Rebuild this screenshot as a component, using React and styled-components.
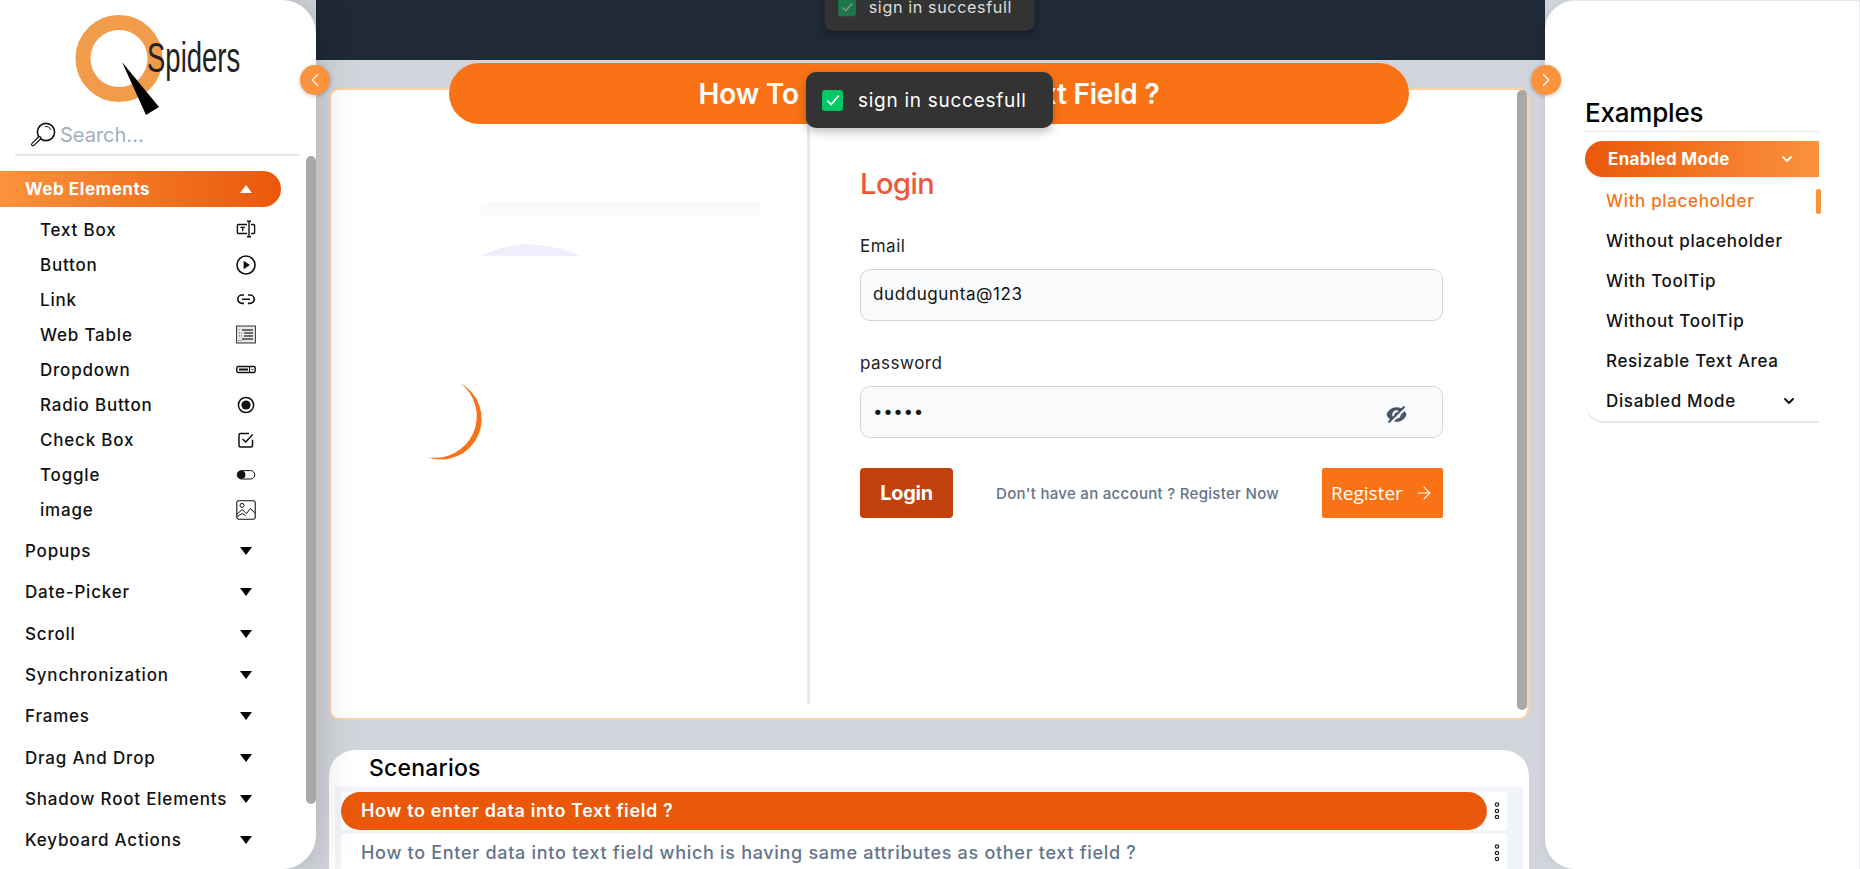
import React from "react";
import styled, { createGlobalStyle } from "styled-components";
import { ChevronDown, ChevronLeft, ChevronRight, ArrowRight } from "lucide-react";
import { HiEyeOff } from "react-icons/hi";

const Global = createGlobalStyle`
  html, body { margin: 0; padding: 0; height: 100%; overflow: hidden; }
  body { font-family: Inter, "Liberation Sans", sans-serif; background: #d1d5db; }
  * { box-sizing: border-box; }
`;

const Page = styled.div`
  display: grid;
  grid-template-columns: 316px 1fr 315px;
  height: 869px;
  overflow: hidden;
  position: relative;
  background: #d1d5db;
`;

const Sidebar = styled.aside`
  position: relative;
  z-index: 3;
  background: #fff;
  border-radius: 0 34px 34px 0;
  box-shadow: 0 0 42px rgba(0, 0, 0, 0.18);
  height: 869px;
  overflow: hidden;
`;

const LogoWrap = styled.div`
  height: 116px;
  padding-left: 70px;
  svg { display: block; }
`;

const SearchRow = styled.div`
  display: flex;
  align-items: center;
  gap: 4px;
  height: 40px;
  margin: 0 16px 0 15px;
  padding: 0 0 0 15px;
  border-bottom: 2px solid #e5e7eb;
`;

const SearchText = styled.span`
  font-size: 20px;
  letter-spacing: 0;
  color: #a0aec0;
`;

const Thumb = styled.div`
  position: absolute;
  right: 0;
  top: 156px;
  width: 10px;
  height: 648px;
  background: #a8a8a8;
  border-radius: 6px;
`;

const Nav = styled.nav`
  padding-top: 15px;
  width: 281px;
`;

const ActiveHead = styled.div`
  display: flex;
  align-items: center;
  justify-content: space-between;
  height: 36px;
  padding: 0 29px 0 25px;
  border-radius: 0 18px 18px 0;
  background: linear-gradient(90deg, #fb923c, #ea580c);
  color: #fff;
  font-size: 17px;
  font-weight: 700;
  letter-spacing: 0.55px;
`;

const SubList = styled.ul`
  list-style: none;
  margin: 5px 0 3.5px;
  padding: 0;
`;

const SubRow = styled.li`
  display: flex;
  align-items: center;
  justify-content: space-between;
  height: 35px;
  padding: 0 25px 0 40px;
  font-size: 17px;
  font-weight: 500;
  letter-spacing: 0.8px;
  color: #111;
  svg { display: block; }
`;

const SectionRow = styled.div`
  display: flex;
  align-items: center;
  justify-content: space-between;
  height: 41.3px;
  padding: 0 29px 0 25px;
  font-size: 17px;
  font-weight: 500;
  letter-spacing: 0.8px;
  color: #111;
  white-space: nowrap;
`;

const Caret = styled.span`
  flex: none;
  width: 0;
  height: 0;
  border-left: 6.5px solid transparent;
  border-right: 6.5px solid transparent;
  border-top: ${(p) => (p.$up ? "0" : "8px solid #000")};
  border-bottom: ${(p) => (p.$up ? "8px solid #fff" : "0")};
`;

const Main = styled.main`
  position: relative;
  display: flex;
  flex-direction: column;
  height: 869px;
  overflow: hidden;
  z-index: 1;
`;

const Header = styled.header`
  flex: none;
  height: 60px;
  background: #1f2937;
`;

const Content = styled.div`
  flex: 1;
  min-height: 0;
  padding: 28px 16px 0 13px;
  display: flex;
  flex-direction: column;
  gap: 30px;
`;

const Card = styled.section`
  position: relative;
  flex: none;
  height: 632px;
  display: grid;
  grid-template-columns: 476px 3px 1fr;
  background: #fff;
  border: 2px solid #fbd3a6;
  border-radius: 10px;
`;

const TitlePill = styled.h1`
  position: absolute;
  left: 118px;
  top: -27px;
  width: 960px;
  height: 61px;
  margin: 0;
  display: flex;
  align-items: center;
  justify-content: center;
  background: #f97316;
  border-radius: 31px;
  color: #fff;
  font-size: 28px;
  font-weight: 600;
  letter-spacing: -0.2px;
  z-index: 2;
`;

const CardThumb = styled.div`
  position: absolute;
  right: 0;
  top: 0;
  width: 10px;
  height: 620px;
  background: #a8a8a8;
  border-radius: 6px;
`;

const Illustration = styled.div`
  svg { display: block; }
`;

const Divider = styled.div`
  background: #e5e7eb;
  margin: 34px 0 14px;
`;

const FormPane = styled.div`
  padding: 72px 84px 0 50px;
`;

const FormTitle = styled.h2`
  margin: 0 0 28px;
  font-size: 29px;
  line-height: 44px;
  font-weight: 500;
  letter-spacing: -0.5px;
  color: #f0563a;
`;

const Label = styled.label`
  display: block;
  font-size: 17px;
  line-height: 24px;
  margin-bottom: 11px;
  color: #222;
  letter-spacing: 0.5px;
`;

const FieldBox = styled.div`
  position: relative;
  height: 52px;
  margin-bottom: 30px;
`;

const Input = styled.input`
  display: block;
  width: 100%;
  height: 100%;
  padding: 0 12px 3px;
  background: #f9fafb;
  border: 1px solid #d1d5db;
  border-radius: 10px;
  font-family: inherit;
  font-size: 17px;
  letter-spacing: 0.6px;
  color: #111;
  outline: none;
`;

const EyeBox = styled.span`
  position: absolute;
  right: 36px;
  top: 18px;
  color: #475569;
  display: flex;
  transform: scaleX(-1);
`;

const ActionRow = styled.div`
  display: flex;
  align-items: center;
  justify-content: space-between;
  height: 50px;
`;

const LoginButton = styled.button`
  width: 93px;
  height: 50px;
  border: 0;
  border-radius: 4px;
  background: #c2410c;
  color: #fff;
  font-family: inherit;
  font-size: 20px;
  font-weight: 700;
  letter-spacing: -0.3px;
`;

const RegisterHint = styled.span`
  font-size: 15px;
  font-weight: 500;
  color: #64748b;
  letter-spacing: 0.3px;
`;

const RegisterButton = styled.button`
  display: flex;
  align-items: center;
  justify-content: center;
  gap: 11px;
  width: 121px;
  height: 50px;
  padding: 0;
  border: 0;
  border-radius: 2px;
  background: #f97316;
  color: #fff;
  font-family: "Open Sans", sans-serif;
  font-size: 19px;
`;

const Scenarios = styled.section`
  flex: none;
  height: 200px;
  background: #fff;
  border-radius: 26px 26px 0 0;
  padding: 0 6px;
`;

const ScenariosTitle = styled.h3`
  margin: 0;
  height: 37px;
  padding-left: 34px;
  font-size: 23px;
  line-height: 37px;
  font-weight: 500;
  letter-spacing: 0.2px;
  color: #000;
`;

const ScenarioList = styled.div`
  display: flex;
  flex-direction: column;
  gap: 4px;
  background: #f1f5f9;
  padding: 5px 16px 0 6px;
  height: 200px;
`;

const ScenarioRow = styled.div`
  display: flex;
  align-items: center;
  justify-content: space-between;
  flex: none;
  height: 38px;
  background: #fff;
  color: #64748b;
  font-size: 18px;
  font-weight: 500;
`;

const ScenarioLabel = styled.span`
  flex: 1;
  height: 100%;
  display: flex;
  align-items: center;
  padding: 0 0 2px 20px;
  border-radius: ${(p) => (p.$active ? "19px" : "0")};
  background: ${(p) => (p.$active ? "#ea580c" : "transparent")};
  color: ${(p) => (p.$active ? "#fff" : "#64748b")};
  font-weight: ${(p) => (p.$active ? 600 : 500)};
  letter-spacing: ${(p) => (p.$active ? "0.62px" : "0.7px")};
`;

const DotsBox = styled.span`
  flex: none;
  width: 20px;
  display: flex;
  justify-content: center;
`;

const RightPanel = styled.aside`
  position: relative;
  z-index: 2;
  background: #fff;
  height: 869px;
  border: 1px solid #e5e7eb;
  border-width: 1px 1px 0 0;
  border-radius: 30px 0 0 30px;
  padding: 94px 40px 0 40px;
  box-shadow: 0 0 8px rgba(0, 0, 0, 0.06);
`;

const RightTitle = styled.h3`
  margin: 0 0 9px;
  height: 37px;
  font-size: 26px;
  line-height: 36px;
  font-weight: 500;
  letter-spacing: -0.2px;
  color: #000;
  border-bottom: 1px solid #e5e7eb;
`;

const ModeHead = styled.div`
  display: flex;
  align-items: center;
  justify-content: space-between;
  height: 36px;
  padding: 0 24px 1px 23px;
  border-radius: 18px 0 0 18px;
  background: linear-gradient(90deg, #ea580c, #fb923c);
  color: #fff;
  font-size: 17px;
  font-weight: 700;
  letter-spacing: 0.3px;
  box-shadow: 0 2px 3px rgba(0, 0, 0, 0.07);
`;

const ExampleList = styled.ul`
  list-style: none;
  margin: 4px 0 0;
  padding: 0;
  border-bottom: 2px solid #e5e7eb;
  border-radius: 0 0 0 20px;
`;

const ExampleItem = styled.li`
  position: relative;
  display: flex;
  align-items: center;
  justify-content: space-between;
  height: 40px;
  padding: 0 22px 0 21px;
  font-size: 17px;
  font-weight: 500;
  letter-spacing: 0.65px;
  color: ${(p) => (p.$active ? "#f97316" : "#111")};
  ${(p) =>
    p.$active
      ? `&::after { content: ""; position: absolute; right: -2px; top: 8px; width: 5px; height: 25px; border-radius: 2px; background: #fb923c; }`
      : ""}
`;

const RoundToggle = styled.button`
  position: absolute;
  top: 65px;
  left: ${(p) => p.$left}px;
  z-index: 5;
  width: 30px;
  height: 30px;
  padding: 0;
  border: 0;
  border-radius: 50%;
  background: #fb923c;
  color: #fff;
  display: flex;
  align-items: center;
  justify-content: center;
  box-shadow: 0 1px 4px rgba(0, 0, 0, 0.25);
`;

const ToastLayer = styled.div`
  position: absolute;
  left: 806px;
  top: ${(p) => p.$top}px;
  z-index: 6;
  transform: scale(${(p) => p.$scale});
  width: 247px;
  height: 56px;
  display: flex;
  align-items: center;
  gap: 15px;
  padding-left: 16px;
  background: #333;
  border-radius: 10px;
  box-shadow: 0 4px 10px rgba(0, 0, 0, 0.25);
  color: ${(p) => (p.$dim ? "#ddd" : "#fff")};
  font-size: 19px;
  letter-spacing: 0.72px;
  white-space: nowrap;
`;

const ToastCheck = styled.span`
  flex: none;
  width: 21px;
  height: 21px;
  display: flex;
  align-items: center;
  justify-content: center;
  border-radius: 3px;
  background: #00c864;
  opacity: ${(p) => (p.$dim ? 0.45 : 1)};
`;

const Icon = ({ children, fill = "none" }) => (
  <svg width="20" height="20" viewBox="0 0 20 20" fill={fill} stroke="#111" strokeWidth="1.4">
    {children}
  </svg>
);

const icons = {
  text: (
    <Icon>
      <path d="M11 4.5H2.4a1 1 0 0 0-1 1v7a1 1 0 0 0 1 1H11M15 4.5h2.6a1 1 0 0 1 1 1v7a1 1 0 0 1-1 1H15" />
      <path d="M13 1.5v15M11 1.3h4M11 16.7h4" />
      <path d="M4.5 7.3h4.4M6.7 7.3v4" strokeWidth="1.3" />
    </Icon>
  ),
  play: (
    <Icon>
      <circle cx="10" cy="10" r="9" strokeWidth="1.6" />
      <path d="M7.6 5.8 14 10l-6.4 4.2z" fill="#111" stroke="none" />
    </Icon>
  ),
  link: (
    <Icon>
      <path d="M8 5H6a4.2 4.2 0 0 0 0 8.4h2M12 5h2a4.2 4.2 0 0 1 0 8.4h-2M6 9.2h8" strokeWidth="1.6" />
    </Icon>
  ),
  table: (
    <Icon>
      <rect x="0.6" y="1" width="18.8" height="17" stroke="#333" strokeWidth="1" fill="#e8e8e8" />
      <path d="M6 5h11M8 8h9M8 11h9M6 14h11" stroke="#444" strokeWidth="1.5" />
      <path d="M2.5 5h2M3 8h3M3 11h3M2.5 15.5h3" stroke="#555" strokeWidth="1" strokeDasharray="1 1" />
    </Icon>
  ),
  dropdown: (
    <Icon>
      <rect x="0.8" y="6.5" width="18.4" height="6" rx="1.5" strokeWidth="1.4" />
      <path d="M3 9.5h9" strokeWidth="2" />
      <path d="M13.5 6.5v6" strokeWidth="1" />
      <path d="M15.3 8.7 16.4 10.2 17.5 8.7" strokeWidth="0.9" />
    </Icon>
  ),
  radio: (
    <Icon>
      <circle cx="10" cy="10" r="7.6" strokeWidth="1.5" />
      <circle cx="10" cy="10" r="4.6" fill="#111" stroke="none" />
    </Icon>
  ),
  check: (
    <Icon>
      <path d="M16.5 9.8v5.7a1.5 1.5 0 0 1-1.5 1.5H4.5A1.5 1.5 0 0 1 3 15.5V5a1.5 1.5 0 0 1 1.5-1.5H13" strokeWidth="1.5" />
      <path d="m6.5 9 3.2 3 7-7.5" strokeWidth="1.5" />
    </Icon>
  ),
  toggle: (
    <Icon>
      <rect x="1.2" y="5.6" width="17.6" height="8.4" rx="4.2" strokeWidth="1" />
      <circle cx="5.4" cy="9.8" r="4" fill="#111" stroke="none" />
    </Icon>
  ),
  image: (
    <Icon>
      <rect x="0.8" y="0.8" width="18.4" height="18.4" rx="1.6" strokeWidth="1.1" />
      <circle cx="6" cy="5.4" r="2" strokeWidth="1" />
      <path d="m1 14 5.2-4.4 4.3 4 4-5.2 4.6 5M1 16.5l5.2-3 3.2 2" strokeWidth="1" />
    </Icon>
  ),
};

const subItems = [
  ["Text Box", "text"],
  ["Button", "play"],
  ["Link", "link"],
  ["Web Table", "table"],
  ["Dropdown", "dropdown"],
  ["Radio Button", "radio"],
  ["Check Box", "check"],
  ["Toggle", "toggle"],
  ["image", "image"],
];

const sections = [
  "Popups",
  "Date-Picker",
  "Scroll",
  "Synchronization",
  "Frames",
  "Drag And Drop",
  "Shadow Root Elements",
  "Keyboard Actions",
];

const examples = ["Without placeholder", "With ToolTip", "Without ToolTip", "Resizable Text Area"];

const Dots = () => (
  <svg width="6" height="20" viewBox="0 0 6 20" fill="none" stroke="#222" strokeWidth="1.2">
    <circle cx="3" cy="3.5" r="1.7" />
    <circle cx="3" cy="10" r="1.7" />
    <circle cx="3" cy="16" r="1.7" />
  </svg>
);

const CheckMark = () => (
  <svg width="16" height="16" viewBox="0 0 14 14" fill="none" stroke="#fff" strokeWidth="1.5">
    <path d="m2 7.5 3.4 3.4L12 3.2" />
  </svg>
);

const Logo = () => (
  <svg width="180" height="116" viewBox="0 0 180 116">
    <circle cx="49" cy="58.5" r="36" fill="none" stroke="#f19c4a" strokeWidth="15" />
    <text transform="translate(77 72) scale(0.655 1)" fontFamily="'Liberation Sans', sans-serif" fontSize="42" fill="#222">
      Spiders
    </text>
    <polygon points="52,62 89,107 76,115" fill="#000" />
  </svg>
);

const Magnifier = () => (
  <svg width="26" height="26" viewBox="0 0 26 26" fill="none" stroke="#111">
    <circle cx="16" cy="10" r="8.6" strokeWidth="1.6" />
    <path d="M15 4.5a6 6 0 0 1 6 3.5" strokeWidth="1" />
    <path d="m9.5 16-6.5 6.4" strokeWidth="4" strokeLinecap="round" />
    <path d="m9.5 16-6.5 6.4" strokeWidth="1.6" stroke="#fff" strokeLinecap="round" />
  </svg>
);

const Placeholder = () => (
  <svg width="476" height="400" viewBox="0 0 476 400">
    <rect x="150" y="112" width="280" height="13" fill="#f9fafb" />
    <path d="M150 165.5 Q196 143 249 166 Z" fill="#f0edfc" />
    <path d="M129 293A40.6 40.6 0 0 1 96 367A41.5 41.5 0 0 0 129 293Z" fill="#f97316" />
  </svg>
);

export default function App() {
  return (
    <Page>
      <Global />
      <Sidebar>
        <LogoWrap>
          <Logo />
        </LogoWrap>
        <SearchRow>
          <Magnifier />
          <SearchText>Search...</SearchText>
        </SearchRow>
        <Thumb />
        <Nav>
          <ActiveHead>
            Web Elements
            <Caret $up />
          </ActiveHead>
          <SubList>
            {subItems.map(([name, icon]) => (
              <SubRow key={name}>
                {name}
                {icons[icon]}
              </SubRow>
            ))}
          </SubList>
          {sections.map((s) => (
            <SectionRow key={s}>
              {s}
              <Caret />
            </SectionRow>
          ))}
        </Nav>
      </Sidebar>

      <Main>
        <Header />
        <Content>
          <Card>
            <TitlePill>How To Enter Data Into Text Field ?</TitlePill>
            <Illustration>
              <Placeholder />
            </Illustration>
            <Divider />
            <FormPane>
              <FormTitle>Login</FormTitle>
              <Label>Email</Label>
              <FieldBox>
                <Input readOnly value="duddugunta@123" />
              </FieldBox>
              <Label>password</Label>
              <FieldBox>
                <Input readOnly type="password" value="12345" />
                <EyeBox>
                  <HiEyeOff size={21} />
                </EyeBox>
              </FieldBox>
              <ActionRow>
                <LoginButton>Login</LoginButton>
                <RegisterHint>Don't have an account ? Register Now</RegisterHint>
                <RegisterButton>
                  Register
                  <ArrowRight size={20} strokeWidth={1.3} />
                </RegisterButton>
              </ActionRow>
            </FormPane>
            <CardThumb />
          </Card>
          <Scenarios>
            <ScenariosTitle>Scenarios</ScenariosTitle>
            <ScenarioList>
              <ScenarioRow>
                <ScenarioLabel $active>How to enter data into Text field ?</ScenarioLabel>
                <DotsBox>
                  <Dots />
                </DotsBox>
              </ScenarioRow>
              <ScenarioRow>
                <ScenarioLabel>How to Enter data into text field which is having same attributes as other text field ?</ScenarioLabel>
                <DotsBox>
                  <Dots />
                </DotsBox>
              </ScenarioRow>
            </ScenarioList>
          </Scenarios>
        </Content>
      </Main>

      <RightPanel>
        <RightTitle>Examples</RightTitle>
        <ModeHead>
          Enabled Mode
          <ChevronDown size={16} strokeWidth={3} />
        </ModeHead>
        <ExampleList>
          <ExampleItem $active>With placeholder</ExampleItem>
          {examples.map((e) => (
            <ExampleItem key={e}>{e}</ExampleItem>
          ))}
          <ExampleItem>
            Disabled Mode
            <ChevronDown size={16} strokeWidth={3} />
          </ExampleItem>
        </ExampleList>
      </RightPanel>

      <RoundToggle $left={300}>
        <ChevronLeft size={22} strokeWidth={1.3} />
      </RoundToggle>
      <RoundToggle $left={1531}>
        <ChevronRight size={22} strokeWidth={1.3} />
      </RoundToggle>

      <ToastLayer $top={-21} $scale={0.85} $dim>
        <ToastCheck $dim>
          <CheckMark />
        </ToastCheck>
        sign in succesfull
      </ToastLayer>
      <ToastLayer $top={72} $scale={1}>
        <ToastCheck>
          <CheckMark />
        </ToastCheck>
        sign in succesfull
      </ToastLayer>
    </Page>
  );
}
